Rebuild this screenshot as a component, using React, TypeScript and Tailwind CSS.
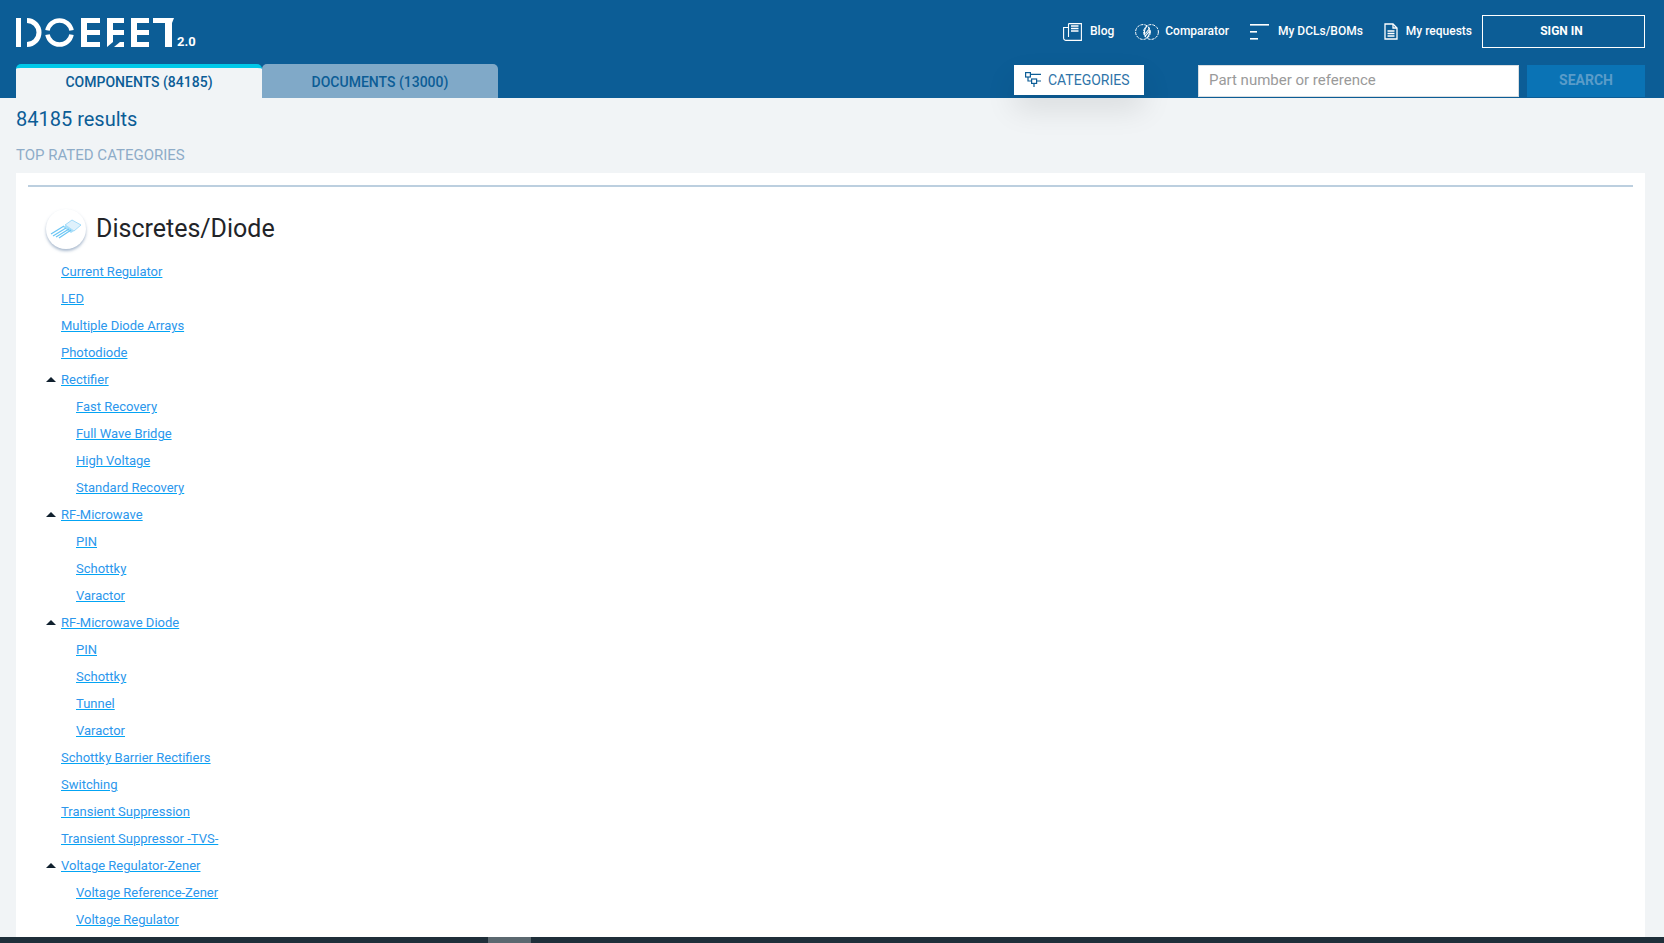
import type { ReactNode } from 'react';

type Row = { label: string; level: 0 | 1; open?: boolean };

const rows: Row[] = [
  { label: 'Current Regulator', level: 0 },
  { label: 'LED', level: 0 },
  { label: 'Multiple Diode Arrays', level: 0 },
  { label: 'Photodiode', level: 0 },
  { label: 'Rectifier', level: 0, open: true },
  { label: 'Fast Recovery', level: 1 },
  { label: 'Full Wave Bridge', level: 1 },
  { label: 'High Voltage', level: 1 },
  { label: 'Standard Recovery', level: 1 },
  { label: 'RF-Microwave', level: 0, open: true },
  { label: 'PIN', level: 1 },
  { label: 'Schottky', level: 1 },
  { label: 'Varactor', level: 1 },
  { label: 'RF-Microwave Diode', level: 0, open: true },
  { label: 'PIN', level: 1 },
  { label: 'Schottky', level: 1 },
  { label: 'Tunnel', level: 1 },
  { label: 'Varactor', level: 1 },
  { label: 'Schottky Barrier Rectifiers', level: 0 },
  { label: 'Switching', level: 0 },
  { label: 'Transient Suppression', level: 0 },
  { label: 'Transient Suppressor -TVS-', level: 0 },
  { label: 'Voltage Regulator-Zener', level: 0, open: true },
  { label: 'Voltage Reference-Zener', level: 1 },
  { label: 'Voltage Regulator', level: 1 },
];

function Logo() {
  return (
    <svg width="158" height="29" viewBox="0 0 158 29" fill="#fff">
      <rect x="0" y="0" width="5" height="29" />
      <path d="M11 0a14.5 14.5 0 0 1 0 29v-5a9.5 9.5 0 0 0 0-19z" />
      <g fill="none" stroke="#fff" strokeWidth="4.5">
        <path d="M31.5 12.4A12.2 12.2 0 0 1 55.5 12.4" />
        <path d="M31.5 16.6A12.2 12.2 0 0 0 55.5 16.6" />
      </g>
      <path d="M65 0h19v5H71v7h13v5H71v7h13v5H65z" />
      <path d="M91 0h17v5H97v7h11v5H97v7l-6 5z" />
      <path d="M98 29l6-5h4v5z" />
      <path d="M115 0h18v5h-12v7h12v5h-12v7h12v5h-18z" />
      <path d="M137 0h21l-2 5v24h-7V5h-12z" />
    </svg>
  );
}

function BlogIcon() {
  return (
    <svg width="19" height="18" viewBox="0 0 19 18" fill="none" stroke="#fff" strokeWidth="1.1">
      <path d="M5.5 0.6H18.4V17.4H3A2.4 2.4 0 0 1 0.6 15V4.5H5.5" />
      <path d="M5.5 0.6V14" />
      <path d="M8 3h7.5M8 5.5h7.5M8 8h7.5" strokeWidth="1.3" />
    </svg>
  );
}

function CompareIcon() {
  return (
    <svg width="24" height="16" viewBox="0 0 24 16" fill="none" stroke="#fff" strokeWidth="1">
      <circle cx="8" cy="8" r="7.4" strokeDasharray="3 1" />
      <circle cx="16" cy="8" r="7.4" strokeDasharray="3 1" />
      <path d="M12 2.2C9.5 4.5 9 9 10.5 13M12 13.8C14.5 11.5 15 7 13.5 3M10.5 9.5l4-5M10.5 12l3.5-4.5" strokeWidth="1.1" />
    </svg>
  );
}

function ListIcon() {
  return (
    <svg width="20" height="16" viewBox="0 0 20 16" fill="#fff">
      <rect x="0" y="0" width="19" height="1.6" />
      <rect x="0" y="7" width="7" height="1.6" />
      <rect x="0" y="14" width="8" height="1.6" />
    </svg>
  );
}

function DocIcon() {
  return (
    <svg width="14" height="17" viewBox="0 0 14 17" fill="none" stroke="#fff" strokeWidth="1.3">
      <path d="M1 1h8l4 4v11H1z" />
      <path d="M9 1v4h4M3.5 8h7M3.5 10.5h7M3.5 13h7" />
    </svg>
  );
}

function CategoriesIcon() {
  return (
    <svg width="16" height="16" viewBox="0 0 16 16" fill="none" stroke="#0c5d96" strokeWidth="1.2">
      <rect x="0.6" y="0.6" width="4.8" height="4.4" />
      <rect x="6.6" y="7" width="5" height="4.4" />
      <path d="M5.4 2.4H16M3 5v4h3.6M11.6 9H16M9 11.4V15" />
    </svg>
  );
}

function DiodeIcon() {
  return (
    <svg width="32" height="20" viewBox="0 0 32 20">
      <path d="M15 6l7-5 9 5-7 6z" fill="#dff1fc" stroke="#8fd3f7" strokeWidth="0.8" />
      <path d="M13 8l3-2 8 6-3 2z" fill="#a9def9" />
      <path d="M1 15l13-8M3 17l13-8M6 18l13-8M9 19l12-8" stroke="#6cc6f4" strokeWidth="1.3" />
    </svg>
  );
}

function NavItem({ icon, gap, children }: { icon: ReactNode; gap: string; children: string }) {
  return (
    <a className={`flex items-center text-xs font-medium text-white ${gap}`}>
      {icon}
      <span className="pb-[2px]">{children}</span>
    </a>
  );
}

export default function App() {
  return (
    <div className="flex h-screen flex-col overflow-hidden bg-[#f1f4f6] font-['Roboto',sans-serif]">
      <header className="flex h-[98px] shrink-0 flex-col bg-[#0c5d96] pl-4 pr-[19px]">
        <div className="flex h-[64px] items-start justify-between">
          <div className="mt-[18px] flex items-end gap-[3px]">
            <Logo />
            <span className="text-[13px] leading-[11px] font-bold text-white">2.0</span>
          </div>
          <div className="mt-[15px] flex items-center">
            <nav className="mr-[10px] flex items-center gap-[21px]">
              <NavItem icon={<BlogIcon />} gap="gap-2">Blog</NavItem>
              <NavItem icon={<CompareIcon />} gap="gap-[6px]">Comparator</NavItem>
              <NavItem icon={<ListIcon />} gap="gap-2">My DCLs/BOMs</NavItem>
              <NavItem icon={<DocIcon />} gap="gap-2">My requests</NavItem>
            </nav>
            <button className="h-[33px] w-[163px] border border-white pr-1 pb-[2px] text-xs font-bold text-white">
              SIGN IN
            </button>
          </div>
        </div>
        <div className="flex h-[34px] items-start">
          <div className="flex h-full">
            <div className="flex w-[246px] items-center justify-center rounded-t-[5px] border-t-4 border-[#00c8e8] bg-[#f1f4f6] pb-[2px] text-sm font-medium text-[#0c5d96]">
              COMPONENTS (84185)
            </div>
            <div className="flex w-[236px] items-center justify-center rounded-t-[5px] bg-[#80a9c8] pt-[2px] text-sm font-medium text-[#0c5d96]">
              DOCUMENTS (13000)
            </div>
          </div>
          <button className="mt-px ml-[516px] flex h-[30px] w-[130px] items-center gap-[7px] bg-white pl-[11px] text-sm text-[#2f74a8] shadow-[0_14px_30px_rgba(0,0,0,0.1)]">
            <CategoriesIcon />
            <span className="pb-px">CATEGORIES</span>
          </button>
          <input
            readOnly
            placeholder="Part number or reference"
            className="mt-px ml-[54px] h-[32px] w-[321px] border border-[#d8dde1] bg-white px-[10px] pb-[2px] text-[15px] outline-none placeholder:text-[#9a9a9a]"
          />
          <button className="mt-px ml-2 h-[32px] w-[118px] bg-[#0a73b5] pb-[2px] text-sm font-bold text-[#5a9cc9]">
            SEARCH
          </button>
        </div>
      </header>

      <main className="flex min-h-0 flex-1 flex-col pl-4 pr-[19px]">
        <h1 className="mt-[9px] text-xl leading-6 text-[#0c5d96]">84185 results</h1>
        <h2 className="mt-[14px] text-[15px] leading-5 text-[#8eacc8]">TOP RATED CATEGORIES</h2>
        <section className="mt-2 min-h-0 flex-1 overflow-hidden bg-white px-3 pt-3">
          <div className="h-[2px] bg-[#bccfdf]" />
          <div className="mt-[21px] ml-[18px] flex items-center gap-[10px]">
            <div className="flex h-10 w-10 items-center justify-center rounded-full bg-white shadow-[0_2px_3px_rgba(100,130,165,0.55)]">
              <DiodeIcon />
            </div>
            <h3 className="pt-px text-[25px] leading-10 text-[#222428]">Discretes/Diode</h3>
          </div>
          <ul className="mt-[9.5px]">
            {rows.map((row, i) => (
              <li
                key={i}
                className={`relative flex h-[27px] items-center text-[13px] ${row.level === 1 ? 'pl-[48px]' : 'pl-[33px]'}`}
              >
                {row.open && (
                  <span className="absolute top-[10px] left-[18px] h-0 w-0 border-x-[5px] border-b-[5px] border-x-transparent border-b-[#10202e]" />
                )}
                <a className="text-[#2c97ec] underline decoration-[#03a4f4]">{row.label}</a>
              </li>
            ))}
          </ul>
        </section>
      </main>

      <footer className="flex h-[6px] shrink-0 bg-[#1f2f3a]">
        <div className="ml-[488px] w-[43px] bg-[#5b6870]" />
      </footer>
    </div>
  );
}
